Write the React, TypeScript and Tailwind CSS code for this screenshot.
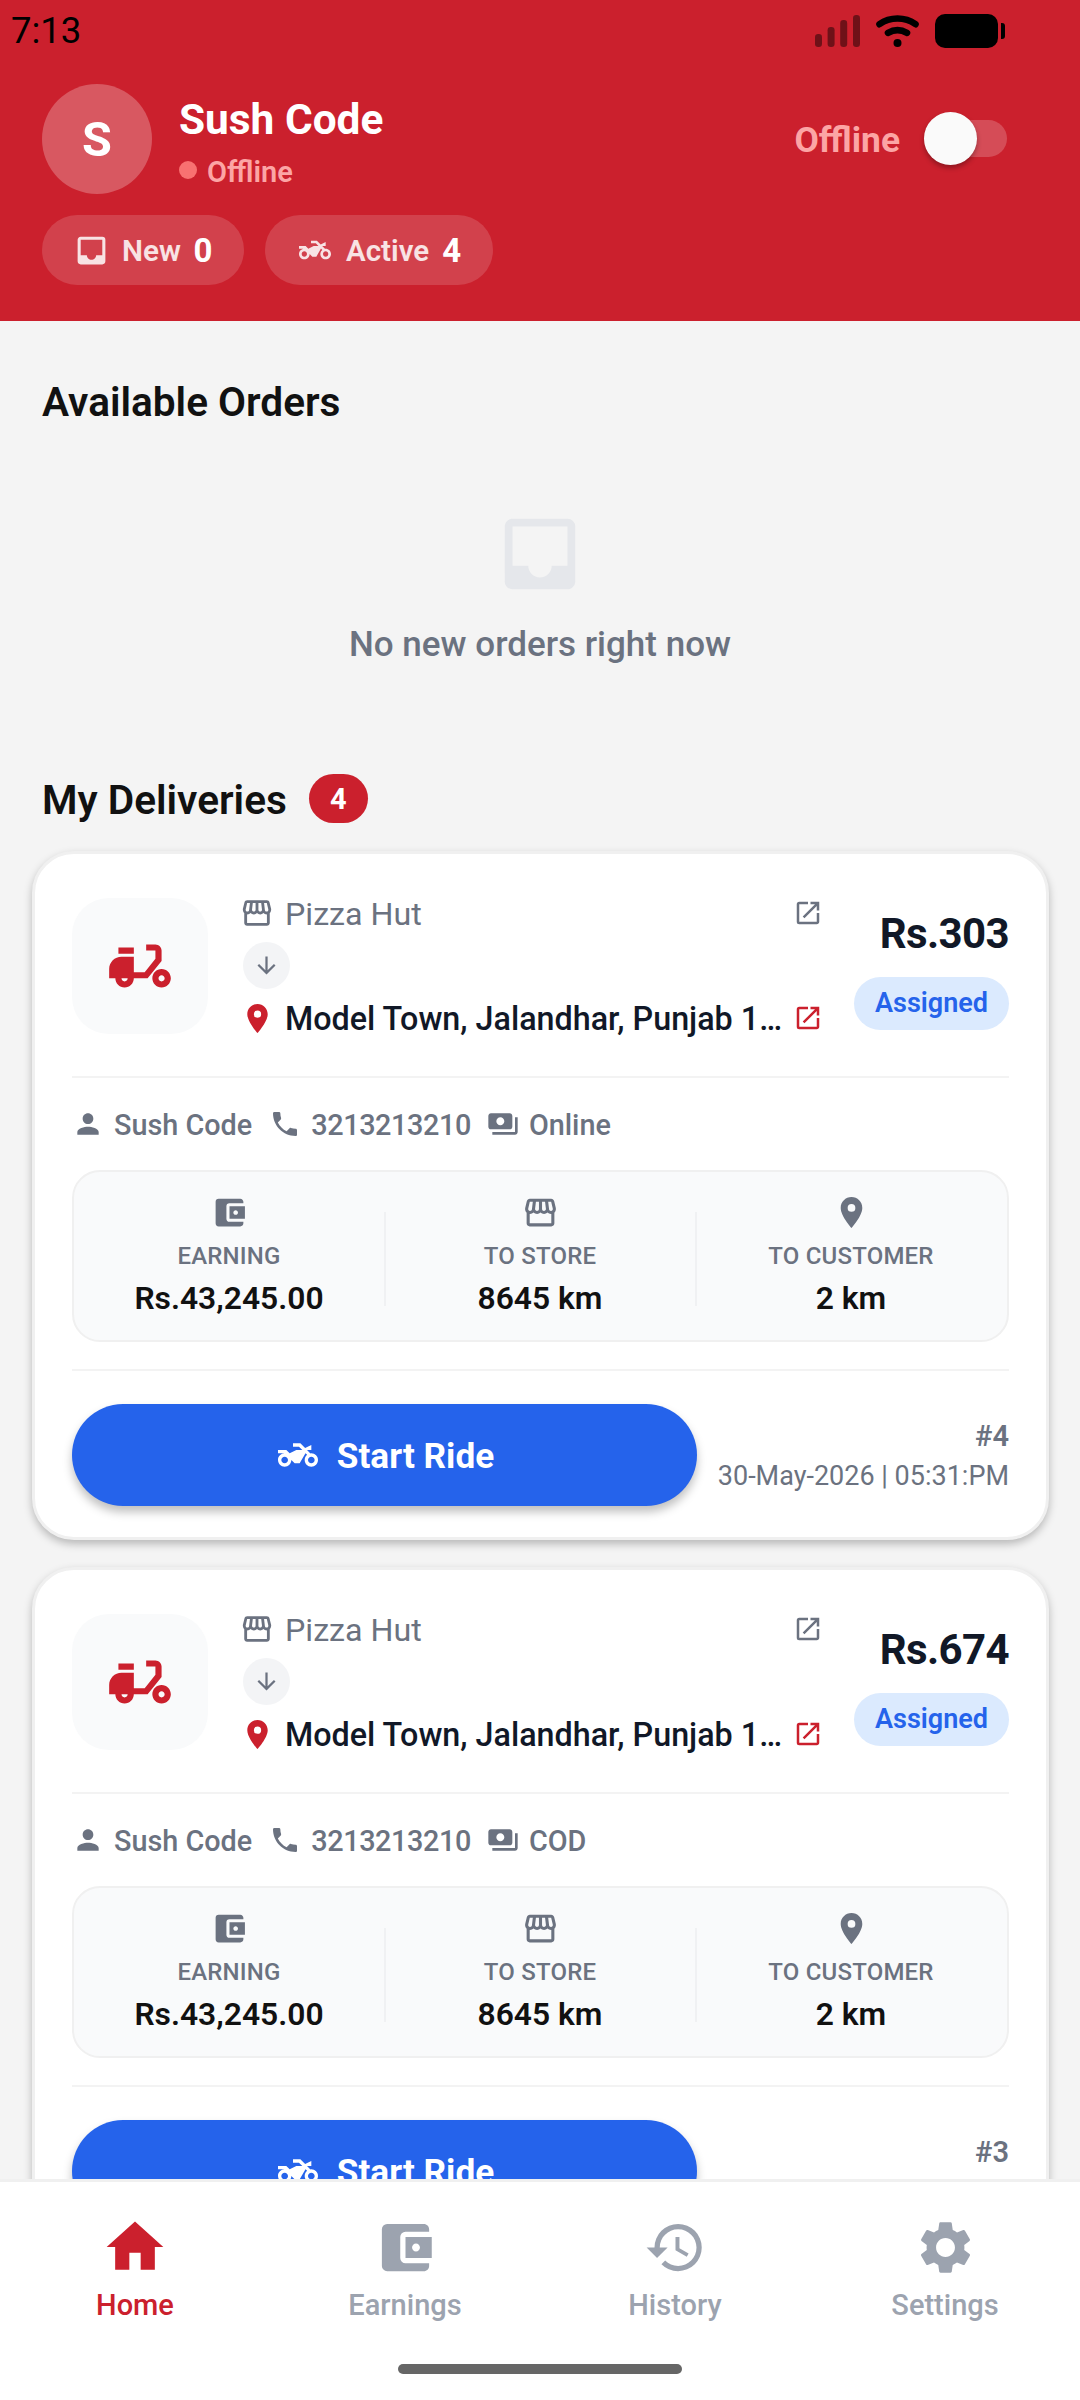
import {
  MdAccountBalanceWallet,
  MdArrowDownward,
  MdDeliveryDining,
  MdHistory,
  MdHome,
  MdInbox,
  MdOpenInNew,
  MdOutlineStorefront,
  MdPayments,
  MdPerson,
  MdPhone,
  MdPlace,
  MdSettings,
  MdTwoWheeler,
} from "react-icons/md";

const FONT = { fontFamily: "Roboto, sans-serif" };

const deliveries = [
  { id: 4, price: "Rs.303", payment: "Online", date: "30-May-2026 | 05:31:PM" },
  { id: 3, price: "Rs.674", payment: "COD", date: "30-May-2026 | 05:29:PM" },
];

const stats = [
  { icon: MdAccountBalanceWallet, label: "EARNING", value: "Rs.43,245.00" },
  { icon: MdOutlineStorefront, label: "TO STORE", value: "8645 km" },
  { icon: MdPlace, label: "TO CUSTOMER", value: "2 km" },
];

const tabs = [
  { icon: MdHome, label: "Home", active: true },
  { icon: MdAccountBalanceWallet, label: "Earnings", active: false },
  { icon: MdHistory, label: "History", active: false },
  { icon: MdSettings, label: "Settings", active: false },
];

function StatusBar() {
  return (
    <div className="flex h-[62px] items-center justify-between pl-[11px] pr-[75px]">
      <span className="text-[36.5px] leading-none text-black">7:13</span>
      <div className="flex items-center">
        <svg width="45" height="34" viewBox="0 0 45 34" fill="#000" opacity="0.45">
          <rect x="0" y="20" width="7" height="13" rx="3.2" />
          <rect x="12.6" y="13" width="7" height="20" rx="3.2" />
          <rect x="25.2" y="6" width="7" height="27" rx="3.2" />
          <rect x="38" y="1" width="7" height="32" rx="3.2" />
        </svg>
        <svg className="ml-4" width="43" height="34" viewBox="0 0 43 34" fill="none" stroke="#000" strokeWidth="6.6" strokeLinecap="round">
          <path d="M3.5 10.2C14 2.6 29 2.6 39.5 10.2" />
          <path d="M12 18.8c6-3.4 13-3.4 19 0" />
          <circle cx="21.5" cy="29" r="4" fill="#000" stroke="none" />
        </svg>
        <div className="ml-4 h-[34px] w-[63px] rounded-[10px] bg-black"></div>
        <div className="ml-[3px] h-4 w-[4px] rounded-r-[3px] bg-black"></div>
      </div>
    </div>
  );
}

function Header() {
  return (
    <header className="h-[321px] shrink-0 bg-[#cb202d]">
      <StatusBar />
      <div className="mt-[22px] flex items-center px-[42px]">
        <div className="flex size-[110px] items-center justify-center rounded-full bg-white/25 pt-[3px] text-[48.5px] font-bold text-white">
          S
        </div>
        <div className="ml-[27px] pt-[7px]">
          <p className="text-[42.4px] font-bold leading-[50px] text-white">Sush Code</p>
          <div className="mt-[4px] flex items-center gap-[10px]">
            <span className="size-[18px] rounded-full bg-[#f87171]"></span>
            <span className="pt-[5px] text-[29px] font-semibold leading-[36px] text-[#fca5a5]">Offline</span>
          </div>
        </div>
        <div className="ml-auto flex items-center pr-[31px]">
          <span className="pt-[4px] text-[35.4px] font-bold text-[#fca5a5]">Offline</span>
          <div className="ml-[24px] flex h-[37px] w-[83px] items-center rounded-full bg-white/20">
            <div className="size-[53px] shrink-0 rounded-full bg-[#fafafa] shadow-[0_3px_5px_rgba(0,0,0,0.3)]"></div>
          </div>
        </div>
      </div>
      <div className="mt-[21px] flex gap-[21px] px-[42px]">
        <div className="flex h-[70px] w-[202px] items-center rounded-full bg-white/15 pl-[31px]">
          <MdInbox className="size-[37px] text-white/85" />
          <span className="ml-[12px] pt-[2px] text-[29.7px] font-semibold text-white/85">New</span>
          <span className="ml-[12.5px] pt-[2px] text-[33px] font-bold text-white">0</span>
        </div>
        <div className="flex h-[70px] w-[228px] items-center rounded-full bg-white/15 pl-[31px]">
          <MdTwoWheeler className="mx-[3px] size-[32px] text-white/85" />
          <span className="ml-[12px] pt-[2px] text-[29.5px] font-semibold text-white/85">Active</span>
          <span className="ml-[13px] pt-[2px] text-[33px] font-bold text-white">4</span>
        </div>
      </div>
    </header>
  );
}

function DeliveryCard({ item }: { item: (typeof deliveries)[number] }) {
  return (
    <article className="h-[689px] shrink-0 rounded-[42px] border-[3px] border-[#f0f0f0] bg-white px-[37px] shadow-[0_4px_8px_rgba(0,0,0,0.25)]">
      {/* Route */}
      <div className="flex h-[222px] items-center pt-px">
        <div className="flex size-[136px] shrink-0 items-center justify-center rounded-[37px] bg-[#f9fafb]">
          <MdDeliveryDining className="size-[74px] text-[#cb202d]" />
        </div>
        <div className="ml-[35px] w-[580px]">
          <div className="flex h-[40px] items-center">
            <MdOutlineStorefront className="-ml-[3px] size-[34px] text-[#6b7280]" />
            <span className="ml-[11px] flex-1 pt-[2px] text-[32.2px] text-[#6b7280]">Pizza Hut</span>
            <MdOpenInNew className="size-[30px] text-[#6b7280]" />
          </div>
          <div className="my-[9px] flex size-[47px] items-center justify-center rounded-full bg-[#f3f4f6]">
            <MdArrowDownward className="size-[27px] text-[#6b7280]" />
          </div>
          <div className="flex h-[40px] items-center">
            <MdPlace className="-ml-[3px] size-[35px] text-[#cb202d]" />
            <span className="ml-[10px] flex-1 whitespace-nowrap pt-[3px] text-[32.3px] font-medium text-[#111827]">Model Town, Jalandhar, Punjab 1…</span>
            <MdOpenInNew className="size-[30px] text-[#cb202d]" />
          </div>
        </div>
        <div className="ml-auto flex flex-col items-end pt-[7px]">
          <p className="text-[42px] font-bold leading-[50px] tracking-[-0.6px] text-[#111827]">{item.price}</p>
          <span className="mt-[18px] flex h-[53px] w-[155px] items-center justify-center rounded-full bg-[#dbeafe] pt-px text-[27px] font-semibold text-[#2563eb]">
            Assigned
          </span>
        </div>
      </div>

      {/* Customer */}
      <div className="flex h-[94px] items-center border-t-2 border-[#f3f3f3] text-[28.8px] font-medium text-[#6b7280]">
        <MdPerson className="size-[32px]" />
        <span className="ml-[10px] pt-[4px]">Sush Code</span>
        <MdPhone className="ml-[17px] size-[32px]" />
        <span className="ml-[10px] pt-[4px] tracking-[-0.4px]">3213213210</span>
        <MdPayments className="ml-[16px] size-[32px]" />
        <span className="ml-[10px] pt-[4px]">{item.payment}</span>
      </div>

      {/* Stats */}
      <div className="flex h-[172px] items-center rounded-[28px] border-2 border-[#f0f0f0] bg-[#f9fafb]">
        {stats.map((stat, idx) => (
          <div key={stat.label} className="relative flex flex-1 flex-col items-center pr-px">
            {idx > 0 && <div className="absolute -left-px top-[18px] h-[94px] w-[2px] bg-[#f0f1f3]"></div>}
            <stat.icon className="size-[37px] text-[#6b7280]" />
            <p className="mt-[10px] text-[24px] font-medium leading-[30px] tracking-[0.2px] text-[#6b7280]">{stat.label}</p>
            <p className="mt-[7px] text-[31.8px] font-semibold leading-[40px] text-[#111]">{stat.value}</p>
          </div>
        ))}
      </div>

      {/* Action */}
      <div className="mt-[27px] flex items-center border-t-2 border-[#f3f3f3] pt-[33px]">
        <button className="flex h-[102px] w-[625px] items-center justify-center rounded-full bg-[#2563eb] pl-[3px] text-white shadow-[0_6px_10px_rgba(0,0,0,0.25)]">
          <MdTwoWheeler className="size-[40px]" />
          <span className="ml-[19px] pt-[3px] text-[35.2px] font-bold">Start Ride</span>
        </button>
        <div className="ml-auto text-right text-[#6b7280]">
          <p className="text-[29px] font-semibold leading-[36px]">#{item.id}</p>
          <p className="mt-[5px] text-[27px] leading-[34px]">{item.date}</p>
        </div>
      </div>
    </article>
  );
}

function TabBar() {
  return (
    <nav className="flex h-[221px] shrink-0 flex-col items-center border-t-[3px] border-[#f0f0f0] bg-white">
      <div className="flex w-full pt-[31px]">
        {tabs.map((tab) => (
          <div key={tab.label} className={`flex flex-1 flex-col items-center ${tab.active ? "text-[#cb202d]" : "text-[#9ca3af]"}`}>
            <div className="flex h-[68px] items-center">
              <tab.icon className={tab.active ? "size-[68px]" : "size-[63px]"} />
            </div>
            <span className="mt-[6px] text-[29px] font-medium leading-[36px]">{tab.label}</span>
          </div>
        ))}
      </div>
      <div className="mt-[41px] h-[10px] w-[284px] rounded-full bg-[#666]"></div>
    </nav>
  );
}

export default function App() {
  return (
    <div className="flex h-[2400px] w-[1080px] flex-col overflow-hidden bg-[#f4f4f4]" style={FONT}>
      <Header />
      <main className="min-h-0 flex-1 overflow-hidden">
        {/* Available orders */}
        <h2 className="px-[42px] pt-[56px] text-[40.6px] font-semibold leading-[50px] text-[#111]">Available Orders</h2>
        <div className="mt-[80px] flex flex-col items-center">
          <MdInbox className="size-[94px] text-[#e5e7eb]" />
          <p className="mt-[23px] text-[35px] font-medium leading-[42px] text-[#6b7280]">No new orders right now</p>
        </div>

        {/* My deliveries */}
        <div className="mt-[108px] flex items-center px-[42px]">
          <h2 className="pt-[3px] text-[40.6px] font-semibold leading-[46px] text-[#111]">My Deliveries</h2>
          <span className="ml-[22px] flex h-[49px] w-[59px] items-center justify-center rounded-full bg-[#cb202d] pt-[3px] text-[29px] font-bold text-white">
            4
          </span>
        </div>
        <div className="mt-[28px] flex flex-col gap-[27px] pl-[32px] pr-[31px]">
          {deliveries.map((item) => (
            <DeliveryCard key={item.id} item={item} />
          ))}
        </div>
      </main>
      <TabBar />
    </div>
  );
}
